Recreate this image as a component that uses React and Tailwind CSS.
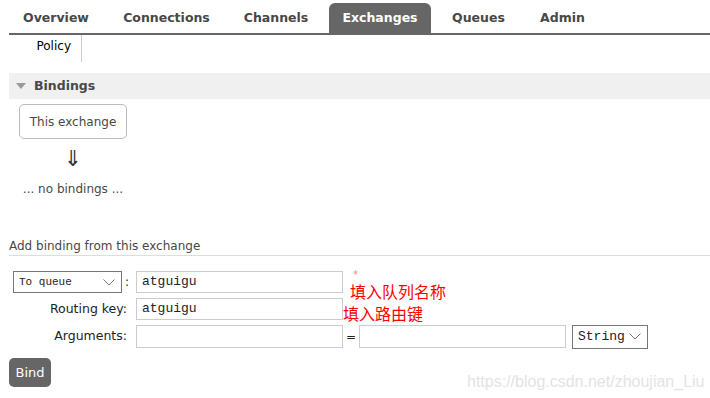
const tabs = [
  { label: 'Overview', w: 'w-[94px]' },
  { label: 'Connections', w: 'w-[113px]' },
  { label: 'Channels', w: 'w-[92px]' },
  { label: 'Exchanges', w: 'w-[102px]', active: true },
  { label: 'Queues', w: 'w-[81px]' },
  { label: 'Admin', w: 'w-[73px]' },
]

function Chevron({ className }) {
  return (
    <svg width="12" height="7" viewBox="0 0 12 7" className={className}>
      <path d="M0.5 0.5 L6 6 L11.5 0.5" fill="none" stroke="#777" strokeWidth="1" />
    </svg>
  )
}

function FakeSelect({ value, className, textClass }) {
  return (
    <div className={`flex items-center justify-between border border-[#767676] bg-white ${className}`}>
      <span className={`font-['Liberation_Mono',monospace] text-[#222] ${textClass}`}>{value}</span>
      <Chevron />
    </div>
  )
}

export default function App() {
  return (
    <div className="relative w-[710px] h-[398px] overflow-hidden bg-white font-['DejaVu_Sans',sans-serif] text-[12px] text-[#484848]">
      {/* main tabs */}
      <div className="ml-[9px] flex gap-[7px] h-[35px] items-end border-b-2 border-[#666]">
        {tabs.map(t => (
          <div key={t.label}
            className={`${t.w} h-[30px] flex items-center justify-center font-bold text-[12.5px] rounded-t-[6px] ${t.active ? 'bg-[#666] text-white' : 'text-[#484848]'}`}>
            {t.label}
          </div>
        ))}
      </div>

      {/* sub nav */}
      <div className="ml-[9px] w-[73px] h-[27px] border-r border-[#ccc] flex items-center justify-end pr-[10px] pb-[5px] text-black">
        Policy
      </div>

      {/* bindings */}
      <div className="mt-[11px] ml-[9px] h-[26px] bg-[#f0f0f0] flex items-center pl-[7px] gap-[8px] text-[#484848]">
        <svg width="10" height="6" viewBox="0 0 10 6"><path d="M0 0 H10 L5 6 Z" fill="#999" /></svg>
        <span className="font-bold text-[12.5px]">Bindings</span>
      </div>

      <div className="ml-[19px] w-[108px] flex flex-col items-center">
        <div className="mt-[5px] w-[108px] h-[35px] border border-[#bbb] rounded-[5px] flex items-center justify-center">
          This exchange
        </div>
        <div className="mt-[8px] h-[24px] text-[22px] leading-[24px] text-[#333]">⇓</div>
        <div className="mt-[9px] whitespace-nowrap">... no bindings ...</div>
      </div>

      {/* add binding */}
      <div className="mt-[40px] ml-[9px] pb-[1px] leading-[16px] border-b border-[#ddd]">
        Add binding from this exchange
      </div>

      <div className="mt-[15px] ml-[13px] flex flex-col gap-[5px]">
        <div className="flex items-center h-[22px]">
          <FakeSelect value="To queue" className="w-[109px] h-[22px] pl-[5px] pr-[6px]" textClass="text-[11px]" />
          <span className="ml-[3px] w-[11px] text-[#222]">:</span>
          <div className="w-[207px] h-[22px] border border-[#ccc] flex items-center pl-[5px] font-['Liberation_Mono',monospace] text-[13px] text-[#222]">atguigu</div>
        </div>
        <div className="flex items-center h-[22px]">
          <span className="w-[114px] text-right text-[#222] text-[12.5px]">Routing key:</span>
          <div className="ml-[9px] w-[207px] h-[22px] border border-[#ccc] flex items-center pl-[5px] font-['Liberation_Mono',monospace] text-[13px] text-[#222]">atguigu</div>
        </div>
        <div className="flex items-center h-[23px]">
          <span className="w-[114px] text-right text-[#222] text-[12.5px]">Arguments:</span>
          <div className="ml-[9px] w-[207px] h-[23px] border border-[#ccc]" />
          <span className="w-[16px] text-center text-[#222]">=</span>
          <div className="w-[207px] h-[23px] border border-[#ccc]" />
          <FakeSelect value="String" className="ml-[6px] w-[76px] h-[24px] pl-[5px] pr-[6px]" textClass="text-[13px]" />
        </div>
      </div>

      <button className="mt-[10px] ml-[9px] w-[42px] h-[29px] rounded-[5px] bg-[#666] text-white text-[13px]">Bind</button>

      {/* annotations */}
      <span className="absolute left-[352px] top-[271px] text-[#f88] text-[12px] leading-[11px] font-['Liberation_Mono',monospace]">*</span>
      <span className="absolute left-[350px] top-[283px] text-[16px] leading-[17px] text-[#f00] font-['Noto_Sans_CJK_SC',sans-serif]">填入队列名称</span>
      <span className="absolute left-[343px] top-[305px] text-[16px] leading-[17px] text-[#f00] font-['Noto_Sans_CJK_SC',sans-serif]">填入路由键</span>

      <span className="absolute left-[467px] top-[370px] text-[16px] text-[#e4e4e4] font-['Liberation_Sans',sans-serif]">https://blog.csdn.net/zhoujian_Liu</span>
    </div>
  )
}
